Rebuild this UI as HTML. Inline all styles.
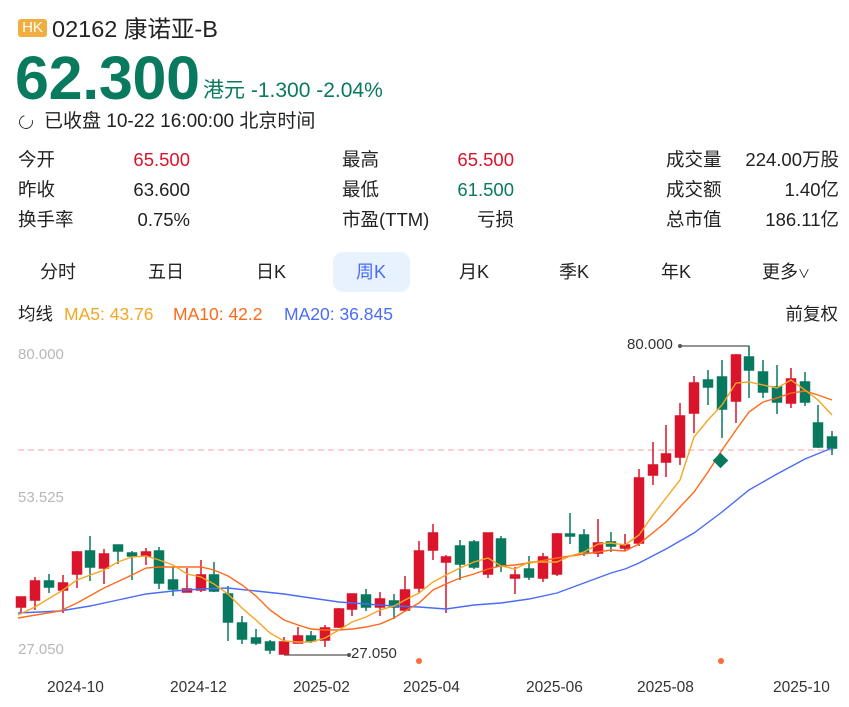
<!DOCTYPE html>
<html><head><meta charset="utf-8"><style>
*{margin:0;padding:0;box-sizing:border-box}
body{width:849px;height:707px;background:#fff;font-family:"Liberation Sans","Noto Sans CJK SC",sans-serif;color:#222;position:relative;overflow:hidden}
.a{position:absolute;white-space:nowrap}
.r{text-align:right}
.red{color:#d9142b}.grn{color:#0a7a5f}
.tab{position:absolute;top:252px;height:40px;line-height:40px;font-size:18px;transform:translateX(-50%);color:#222}
.d{position:absolute;top:679px;font-size:15.5px;color:#333;white-space:nowrap}
</style></head><body>
<div class="a" style="left:18px;top:19px;width:29px;height:18px;background:#efae3f;border-radius:3px;color:#fff;font-size:15px;line-height:18px;text-align:center">HK</div>
<div class="a" style="left:52px;top:15px;font-size:23.5px;line-height:28px">02162 康诺亚-B</div>
<div class="a grn" style="left:15px;top:45px;font-size:61px;font-weight:bold;line-height:66px;letter-spacing:-0.3px">62.300</div>
<div class="a grn" style="left:203px;top:78px;font-size:21px;line-height:26px">港元 -1.300 -2.04%</div>
<div class="a" style="left:19px;top:115px;width:14px;height:14px;border:1.6px solid #333;border-radius:50%;border-top-color:transparent;transform:rotate(30deg)"></div>
<div class="a" style="left:44px;top:110px;font-size:19px;line-height:24px">已收盘 10-22 16:00:00 北京时间</div>

<div class="a" style="left:18px;top:145px;font-size:18.5px;line-height:30px">今开<br>昨收<br>换手率</div>
<div class="a r" style="left:90px;width:100px;top:145px;font-size:18.5px;line-height:30px"><span class="red">65.500</span><br>63.600<br>0.75%</div>
<div class="a" style="left:342px;top:145px;font-size:18.5px;line-height:30px">最高<br>最低<br>市盈(TTM)</div>
<div class="a r" style="left:410px;width:104px;top:145px;font-size:18.5px;line-height:30px"><span class="red">65.500</span><br><span class="grn">61.500</span><br>亏损</div>
<div class="a" style="left:666px;top:145px;font-size:18.5px;line-height:30px">成交量<br>成交额<br>总市值</div>
<div class="a r" style="left:700px;width:139px;top:145px;font-size:18.5px;line-height:30px">224.00万股<br>1.40亿<br>186.11亿</div>

<div class="a" style="left:333px;top:252px;width:77px;height:40px;background:#e8f1fe;border-radius:10px"></div>
<div class="tab" style="left:58px">分时</div>
<div class="tab" style="left:166px">五日</div>
<div class="tab" style="left:271px">日K</div>
<div class="tab" style="left:371px;color:#4a6cf7">周K</div>
<div class="tab" style="left:474px">月K</div>
<div class="tab" style="left:574px">季K</div>
<div class="tab" style="left:676px">年K</div>
<div class="tab" style="left:786px">更多<span style="font-size:12px">∨</span></div>

<div class="a" style="left:18px;top:302px;font-size:17.5px;line-height:24px">均线</div>
<div class="a" style="left:64px;top:302px;font-size:17.5px;line-height:24px;color:#f5a623">MA5: 43.76</div>
<div class="a" style="left:173px;top:302px;font-size:17.5px;line-height:24px;color:#ff6a1a">MA10: 42.2</div>
<div class="a" style="left:284px;top:302px;font-size:17.5px;line-height:24px;color:#4a6cf7">MA20: 36.845</div>
<div class="a" style="right:11px;top:302px;font-size:17.5px;line-height:24px">前复权</div>

<div class="a" style="left:18px;top:346px;font-size:15px;color:#b8b8b8">80.000</div>
<div class="a" style="left:18px;top:489px;font-size:15px;color:#b8b8b8">53.525</div>
<div class="a" style="left:18px;top:641px;font-size:15px;color:#b8b8b8">27.050</div>
<div class="a" style="left:627px;top:336px;font-size:15px;color:#333">80.000</div>
<div class="a" style="left:351px;top:645px;font-size:15px;color:#333">27.050</div>
<div class="d" style="left:47px">2024-10</div>
<div class="d" style="left:170px">2024-12</div>
<div class="d" style="left:293px">2025-02</div>
<div class="d" style="left:403px">2025-04</div>
<div class="d" style="left:526px">2025-06</div>
<div class="d" style="left:637px">2025-08</div>
<div class="d" style="left:773px">2025-10</div>

<svg class="a" style="left:0;top:0" width="849" height="707">
<line x1="18" y1="450" x2="838" y2="450" stroke="#f7b3b3" stroke-width="1.3" stroke-dasharray="6,4"/>
<polyline fill="none" stroke="#555" stroke-width="1.2" points="680,346 749,346 749,355"/>
<circle cx="680" cy="346" r="2" fill="#555"/>
<polyline fill="none" stroke="#555" stroke-width="1.2" points="284,655 349,655"/>
<circle cx="349" cy="655" r="2" fill="#555"/>
<g stroke-width="1.5">
<g stroke="#d9142b" fill="#d9142b">
<line x1="21" y1="597" x2="21" y2="613"/><rect x="16.5" y="597" width="9" height="10"/>
<line x1="35" y1="577" x2="35" y2="610"/><rect x="30.5" y="581" width="9" height="19"/>
<line x1="63" y1="575" x2="63" y2="613"/><rect x="58.5" y="583" width="9" height="7"/>
<line x1="77" y1="551" x2="77" y2="588"/><rect x="72.5" y="552" width="9" height="22"/>
<line x1="104" y1="549" x2="104" y2="584"/><rect x="99.5" y="554" width="9" height="14"/>
<line x1="146" y1="548" x2="146" y2="565"/><rect x="141.5" y="552" width="9" height="4"/>
<line x1="187" y1="568" x2="187" y2="592"/><rect x="182.5" y="589" width="9" height="3"/>
<line x1="201" y1="560" x2="201" y2="592"/><rect x="196.5" y="575" width="9" height="15"/>
<line x1="284" y1="637" x2="284" y2="654"/><rect x="279.5" y="642" width="9" height="12"/>
<line x1="298" y1="627" x2="298" y2="643"/><rect x="293.5" y="636" width="9" height="7"/>
<line x1="325" y1="625" x2="325" y2="647"/><rect x="320.5" y="628" width="9" height="12"/>
<line x1="339" y1="608" x2="339" y2="628"/><rect x="334.5" y="609" width="9" height="18"/>
<line x1="352" y1="594" x2="352" y2="616"/><rect x="347.5" y="594" width="9" height="15"/>
<line x1="380" y1="592" x2="380" y2="616"/><rect x="375.5" y="599" width="9" height="8"/>
<line x1="405" y1="576" x2="405" y2="612"/><rect x="400.5" y="590" width="9" height="20"/>
<line x1="419" y1="541" x2="419" y2="593"/><rect x="414.5" y="551" width="9" height="37"/>
<line x1="433" y1="524" x2="433" y2="560"/><rect x="428.5" y="533" width="9" height="17"/>
<line x1="446" y1="555" x2="446" y2="613"/><rect x="441.5" y="557" width="9" height="5"/>
<line x1="488" y1="533" x2="488" y2="578"/><rect x="483.5" y="533" width="9" height="41"/>
<line x1="515" y1="567" x2="515" y2="594"/><rect x="510.5" y="575" width="9" height="3"/>
<line x1="543" y1="553" x2="543" y2="582"/><rect x="538.5" y="557" width="9" height="21"/>
<line x1="557" y1="533" x2="557" y2="576"/><rect x="552.5" y="534" width="9" height="40"/>
<line x1="598" y1="519" x2="598" y2="557"/><rect x="593.5" y="543" width="9" height="10"/>
<line x1="625" y1="534" x2="625" y2="551"/><rect x="620.5" y="545" width="9" height="3"/>
<line x1="639" y1="469" x2="639" y2="546"/><rect x="634.5" y="478" width="9" height="65"/>
<line x1="653" y1="442" x2="653" y2="485"/><rect x="648.5" y="465" width="9" height="10"/>
<line x1="666" y1="425" x2="666" y2="477"/><rect x="661.5" y="454" width="9" height="8"/>
<line x1="680" y1="403" x2="680" y2="465"/><rect x="675.5" y="416" width="9" height="41"/>
<line x1="694" y1="376" x2="694" y2="433"/><rect x="689.5" y="383" width="9" height="30"/>
<line x1="736" y1="354" x2="736" y2="423"/><rect x="731.5" y="355" width="9" height="46"/>
<line x1="791" y1="368" x2="791" y2="408"/><rect x="786.5" y="379" width="9" height="24"/>
</g>
<g stroke="#08785f" fill="#08785f">
<line x1="49" y1="574" x2="49" y2="593"/><rect x="44.5" y="581" width="9" height="6"/>
<line x1="90" y1="536" x2="90" y2="581"/><rect x="85.5" y="551" width="9" height="16"/>
<line x1="118" y1="545" x2="118" y2="564"/><rect x="113.5" y="545" width="9" height="6"/>
<line x1="132" y1="551" x2="132" y2="580"/><rect x="127.5" y="553" width="9" height="3"/>
<line x1="159" y1="547" x2="159" y2="589"/><rect x="154.5" y="551" width="9" height="32"/>
<line x1="173" y1="567" x2="173" y2="596"/><rect x="168.5" y="580" width="9" height="9"/>
<line x1="214" y1="562" x2="214" y2="592"/><rect x="209.5" y="575" width="9" height="16"/>
<line x1="228" y1="586" x2="228" y2="641"/><rect x="223.5" y="594" width="9" height="28"/>
<line x1="242" y1="616" x2="242" y2="644"/><rect x="237.5" y="623" width="9" height="16"/>
<line x1="256" y1="629" x2="256" y2="645"/><rect x="251.5" y="638" width="9" height="5"/>
<line x1="270" y1="640" x2="270" y2="654"/><rect x="265.5" y="642" width="9" height="8"/>
<line x1="311" y1="631" x2="311" y2="643"/><rect x="306.5" y="636" width="9" height="5"/>
<line x1="366" y1="589" x2="366" y2="611"/><rect x="361.5" y="595" width="9" height="12"/>
<line x1="394" y1="594" x2="394" y2="619"/><rect x="389.5" y="601" width="9" height="6"/>
<line x1="460" y1="540" x2="460" y2="580"/><rect x="455.5" y="546" width="9" height="18"/>
<line x1="474" y1="540" x2="474" y2="569"/><rect x="469.5" y="542" width="9" height="25"/>
<line x1="501" y1="536" x2="501" y2="572"/><rect x="496.5" y="539" width="9" height="27"/>
<line x1="529" y1="556" x2="529" y2="580"/><rect x="524.5" y="569" width="9" height="8"/>
<line x1="570" y1="513" x2="570" y2="544"/><rect x="565.5" y="534" width="9" height="2"/>
<line x1="584" y1="529" x2="584" y2="556"/><rect x="579.5" y="535" width="9" height="17"/>
<line x1="611" y1="532" x2="611" y2="552"/><rect x="606.5" y="542" width="9" height="4"/>
<line x1="708" y1="370" x2="708" y2="405"/><rect x="703.5" y="380" width="9" height="7"/>
<line x1="722" y1="360" x2="722" y2="438"/><rect x="717.5" y="377" width="9" height="32"/>
<line x1="749" y1="346" x2="749" y2="398"/><rect x="744.5" y="357" width="9" height="13"/>
<line x1="763" y1="360" x2="763" y2="398"/><rect x="758.5" y="372" width="9" height="20"/>
<line x1="777" y1="365" x2="777" y2="414"/><rect x="772.5" y="387" width="9" height="15"/>
<line x1="805" y1="372" x2="805" y2="406"/><rect x="800.5" y="382" width="9" height="20"/>
<line x1="818" y1="405" x2="818" y2="448"/><rect x="813.5" y="423" width="9" height="24"/>
<line x1="832" y1="431" x2="832" y2="455"/><rect x="827.5" y="437" width="9" height="11"/>
</g>
</g>
<polyline fill="none" stroke="#4a6cf7" stroke-width="1.4" points="18,613 60,611 90,606 118,600 146,594 173,591 201,589 228,588 256,591 284,594 311,598 339,602 366,604 394,606 419,607 446,609 474,605 501,603 529,599 557,593 584,583 611,573 625,569 639,563 666,549 694,533 722,512 749,490 777,474 805,459 832,448"/>
<polyline fill="none" stroke="#ff6a1a" stroke-width="1.4" points="18,618 60,611 77,603 104,588 132,575 146,568 159,567 173,567 201,567 214,570 228,576 242,585 256,596 270,610 284,620 298,625 311,629 325,630 339,630 352,629 366,627 380,624 394,618 405,611 419,603 433,590 446,584 460,578 474,574 488,569 501,566 515,565 529,563 557,558 584,554 611,550 625,551 639,544 666,522 694,492 708,472 722,450 736,430 749,412 763,402 777,398 791,393 805,391 818,395 832,400"/>
<polyline fill="none" stroke="#f5a623" stroke-width="1.4" points="18,615 35,607 63,590 77,580 104,570 118,562 132,557 146,556 159,560 173,565 187,574 201,577 214,584 228,594 242,608 256,620 270,633 284,641 298,642 311,642 325,638 339,630 352,622 366,617 380,610 394,606 405,600 419,593 433,582 446,575 460,568 474,562 488,558 501,566 515,569 529,562 543,562 557,562 570,556 584,552 598,544 611,543 625,545 639,535 653,515 666,498 680,480 694,437 708,420 722,405 736,383 749,382 763,385 777,388 791,380 805,390 818,400 832,415"/>
<rect x="715" y="455" width="11" height="11" fill="#08785f" transform="rotate(45 720.5 460.5)"/>
<circle cx="419" cy="661" r="3" fill="#ff6a3a"/>
<circle cx="721" cy="661" r="3" fill="#ff6a3a"/>
</svg>
</body></html>
